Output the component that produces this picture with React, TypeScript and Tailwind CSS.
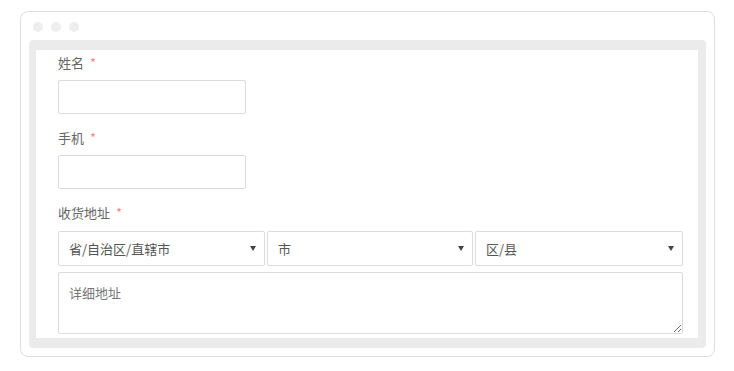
import React from "react";

const font = { fontFamily: '"Noto Sans CJK SC", "Noto Sans", sans-serif' };

function Label({ text }: { text: string }) {
  return (
    <div className="flex h-[20px] items-center text-[13px] leading-[20px] text-[#666]">
      <span>{text}</span>
      <span className="ml-[6px] -mt-[1px] text-[13px] text-[#f28b8b]">*</span>
    </div>
  );
}

function Arrow() {
  return (
    <svg width="6" height="5" viewBox="0 0 6 5" className="shrink-0">
      <path d="M0 0 L6 0 L3 5 Z" fill="#444" />
    </svg>
  );
}

function Select({ text, className }: { text: string; className?: string }) {
  return (
    <div
      className={
        "flex h-[35px] items-center justify-between rounded-[2px] border border-[#dcdcdc] bg-white pl-[10px] pr-[8px] text-[13px] text-[#555] " +
        (className || "")
      }
    >
      <span>{text}</span>
      <Arrow />
    </div>
  );
}

export default function App() {
  return (
    <div className="h-[371px] w-[734px] bg-white pt-[11px] pl-[20px]" style={font}>
      <div className="flex h-[346px] w-[695px] flex-col rounded-[8px] border border-[#dedede] bg-white">
        <div className="flex h-[28px] items-center gap-[8px] pl-[12px] pt-[1px]">
          <div className="h-[10px] w-[10px] rounded-full bg-[#eeeeee]" />
          <div className="h-[10px] w-[10px] rounded-full bg-[#eeeeee]" />
          <div className="h-[10px] w-[10px] rounded-full bg-[#eeeeee]" />
        </div>
        <div className="ml-[8px] h-[308px] w-[677px] rounded-[4px] bg-[#ebebeb] pt-[10px] pl-[7px] pr-[8px] pb-[10px]">
          <div className="h-[288px] w-[662px] overflow-hidden bg-white pl-[22px] pt-[3px]">
            <Label text="姓名" />
            <div className="mt-[7px] h-[34px] w-[188px] rounded-[2px] border border-[#dcdcdc]" />
            <div className="mt-[14px]">
              <Label text="手机" />
            </div>
            <div className="mt-[7px] h-[34px] w-[188px] rounded-[2px] border border-[#dcdcdc]" />
            <div className="mt-[14px]">
              <Label text="收货地址" />
            </div>
            <div className="mt-[8px] flex w-[625px] gap-[2px]">
              <Select text="省/自治区/直辖市" className="w-[207px]" />
              <Select text="市" className="w-[206px]" />
              <Select text="区/县" className="w-[208px]" />
            </div>
            <textarea
              className="mt-[6px] block h-[62px] w-[625px] rounded-[2px] border border-[#dcdcdc] px-[10px] py-[10px] text-[13px] leading-[20px] text-[#555] placeholder:text-[#777] outline-none"
              placeholder="详细地址"
              style={font}
            />
          </div>
        </div>
      </div>
    </div>
  );
}
